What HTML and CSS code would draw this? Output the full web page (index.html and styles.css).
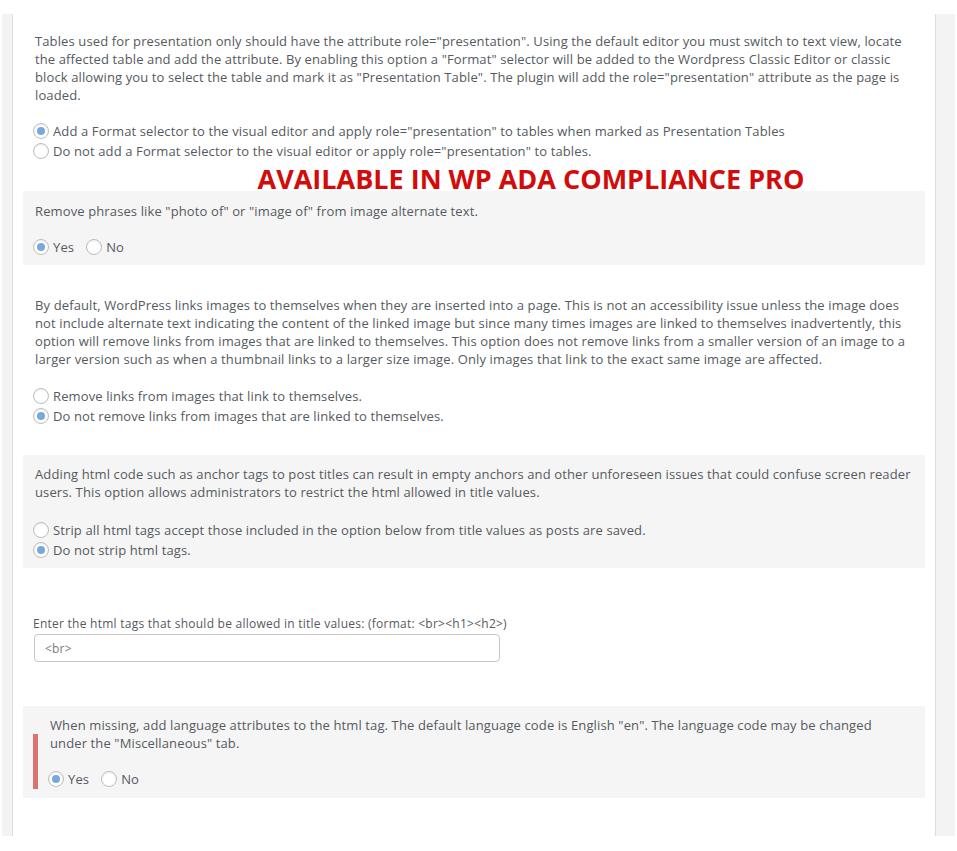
FILE: index.html
```html
<!DOCTYPE html>
<html lang="en">
<head>
<meta charset="utf-8">
<title>WP ADA Compliance settings</title>
<link rel="stylesheet" href="styles.css">
</head>
<body>
<div class="frame">
  <div class="panel">
    <div class="opt opt-first">
      <p>Tables used for presentation only should have the attribute role="presentation". Using the default editor you must switch to text view, locate the affected table and add the attribute. By enabling this option a "Format" selector will be added to the Wordpress Classic Editor or classic block allowing you to select the table and mark it as "Presentation Table". The plugin will add the role="presentation" attribute as the page is loaded.</p>
      <div class="radios">
        <label class="radio"><input type="radio" name="pres" checked> Add a Format selector to the visual editor and apply role="presentation" to tables when marked as Presentation Tables</label>
        <label class="radio"><input type="radio" name="pres"> Do not add a Format selector to the visual editor or apply role="presentation" to tables.</label>
      </div>
    </div>
    <h2 class="pro">AVAILABLE IN WP ADA COMPLIANCE PRO</h2>
    <div class="opt shaded opt-b2">
      <p>Remove phrases like "photo of" or "image of" from image alternate text.</p>
      <div class="radios inline">
        <label class="radio"><input type="radio" name="phr" checked> Yes</label>
        <label class="radio"><input type="radio" name="phr"> No</label>
      </div>
    </div>
    <div class="opt opt-b3">
      <p>By default, WordPress links images to themselves when they are inserted into a page. This is not an accessibility issue unless the image does not include alternate text indicating the content of the linked image but since many times images are linked to themselves inadvertently, this option will remove links from images that are linked to themselves. This option does not remove links from a smaller version of an image to a larger version such as when a thumbnail links to a larger size image. Only images that link to the exact same image are affected.</p>
      <div class="radios">
        <label class="radio"><input type="radio" name="lnk"> Remove links from images that link to themselves.</label>
        <label class="radio"><input type="radio" name="lnk" checked> Do not remove links from images that are linked to themselves.</label>
      </div>
    </div>
    <div class="opt shaded opt-b4">
      <p>Adding html code such as anchor tags to post titles can result in empty anchors and other unforeseen issues that could confuse screen reader users. This option allows administrators to restrict the html allowed in title values.</p>
      <div class="radios">
        <label class="radio"><input type="radio" name="strip"> Strip all html tags accept those included in the option below from title values as posts are saved.</label>
        <label class="radio"><input type="radio" name="strip" checked> Do not strip html tags.</label>
      </div>
    </div>
    <div class="opt opt-b5">
      <label class="field-label" for="tags">Enter the html tags that should be allowed in title values: (format: &lt;br&gt;&lt;h1&gt;&lt;h2&gt;)</label>
      <input class="text-input" id="tags" type="text" value="&lt;br&gt;">
    </div>
    <div class="opt shaded opt-b6">
      <p>When missing, add language attributes to the html tag. The default language code is English "en". The language code may be changed under the "Miscellaneous" tab.</p>
      <div class="radios inline">
        <label class="radio"><input type="radio" name="lang" checked> Yes</label>
        <label class="radio"><input type="radio" name="lang"> No</label>
      </div>
    </div>
  </div>
</div>
</body>
</html>
```

FILE: styles.css
```css
* { box-sizing: border-box; }

html, body {
  margin: 0;
  padding: 0;
  background: #ffffff;
}

body {
  font-family: "Open Sans", "Noto Sans", sans-serif;
  font-size: 13px;
  letter-spacing: 0.12px;
  line-height: 18px;
  color: #555a60;
}

.frame {
  margin: 14px 2px 0 2px;
  height: 822px;
  background: #f3f3f3;
  display: flex;
}

.panel {
  margin-left: 10px;
  width: 924px;
  background: #ffffff;
  border-left: 1px solid #dcdcdc;
  border-right: 1px solid #dcdcdc;
  padding-top: 8px;
  overflow: hidden;
}

.opt {
  margin: 0 10px;
  padding: 10px 12px 8px;
}

.opt p {
  margin: 0 0 17px;
}

.shaded {
  background: #f5f5f5;
}

.opt-first { padding-bottom: 6px; }

.pro {
  margin: 0;
  padding-left: 114px;
  text-align: center;
  font-family: "Open Sans", sans-serif;
  font-weight: 700;
  font-size: 27px;
  line-height: 24px;
  color: #d20b0b;
  letter-spacing: 0;
}

.opt-b2 { padding-top: 11px; }
.opt-b3 { margin-top: 21px; }
.opt-b3 p { margin-bottom: 18px; }
.opt-b4 { margin-top: 21px; }
.opt-b4 p { margin-bottom: 19px; }

.opt-b5 {
  margin-top: 21px;
  padding: 27px 10px 8px;
}

.opt-b6 {
  position: relative;
  margin-top: 36px;
  padding: 10px 30px 9px 27px;
}

.opt-b6::before {
  content: "";
  position: absolute;
  left: 10px;
  top: 28px;
  bottom: 9px;
  width: 5px;
  background: #d97474;
}

.radios {
  display: flex;
  flex-direction: column;
}

.radios.inline {
  flex-direction: row;
  gap: 14px;
}

.radio {
  display: flex;
  align-items: center;
  height: 20px;
  gap: 4px;
}

.radio input {
  appearance: none;
  -webkit-appearance: none;
  width: 16px;
  height: 16px;
  margin: 0 0 0 -2px;
  border: 1px solid #bdbdbd;
  border-radius: 50%;
  background: #ffffff;
  box-shadow: inset 0 1px 2px rgba(0, 0, 0, 0.08);
  display: grid;
  place-items: center;
  flex: none;
}

.radio input:checked::before {
  content: "";
  width: 8px;
  height: 8px;
  border-radius: 50%;
  background: #78a9dc;
}

.field-label {
  display: block;
  font-size: 12px;
  letter-spacing: 0.25px;
  line-height: 16px;
  margin-bottom: 2px;
}

.text-input {
  display: block;
  margin-left: 1px;
  width: 466px;
  height: 28px;
  border: 1px solid #c6c6c6;
  border-radius: 4px;
  padding: 0 10px;
  font-family: "Open Sans", sans-serif;
  font-size: 12px;
  letter-spacing: 0.2px;
  color: #7a7a7a;
  background: #ffffff;
}
```
